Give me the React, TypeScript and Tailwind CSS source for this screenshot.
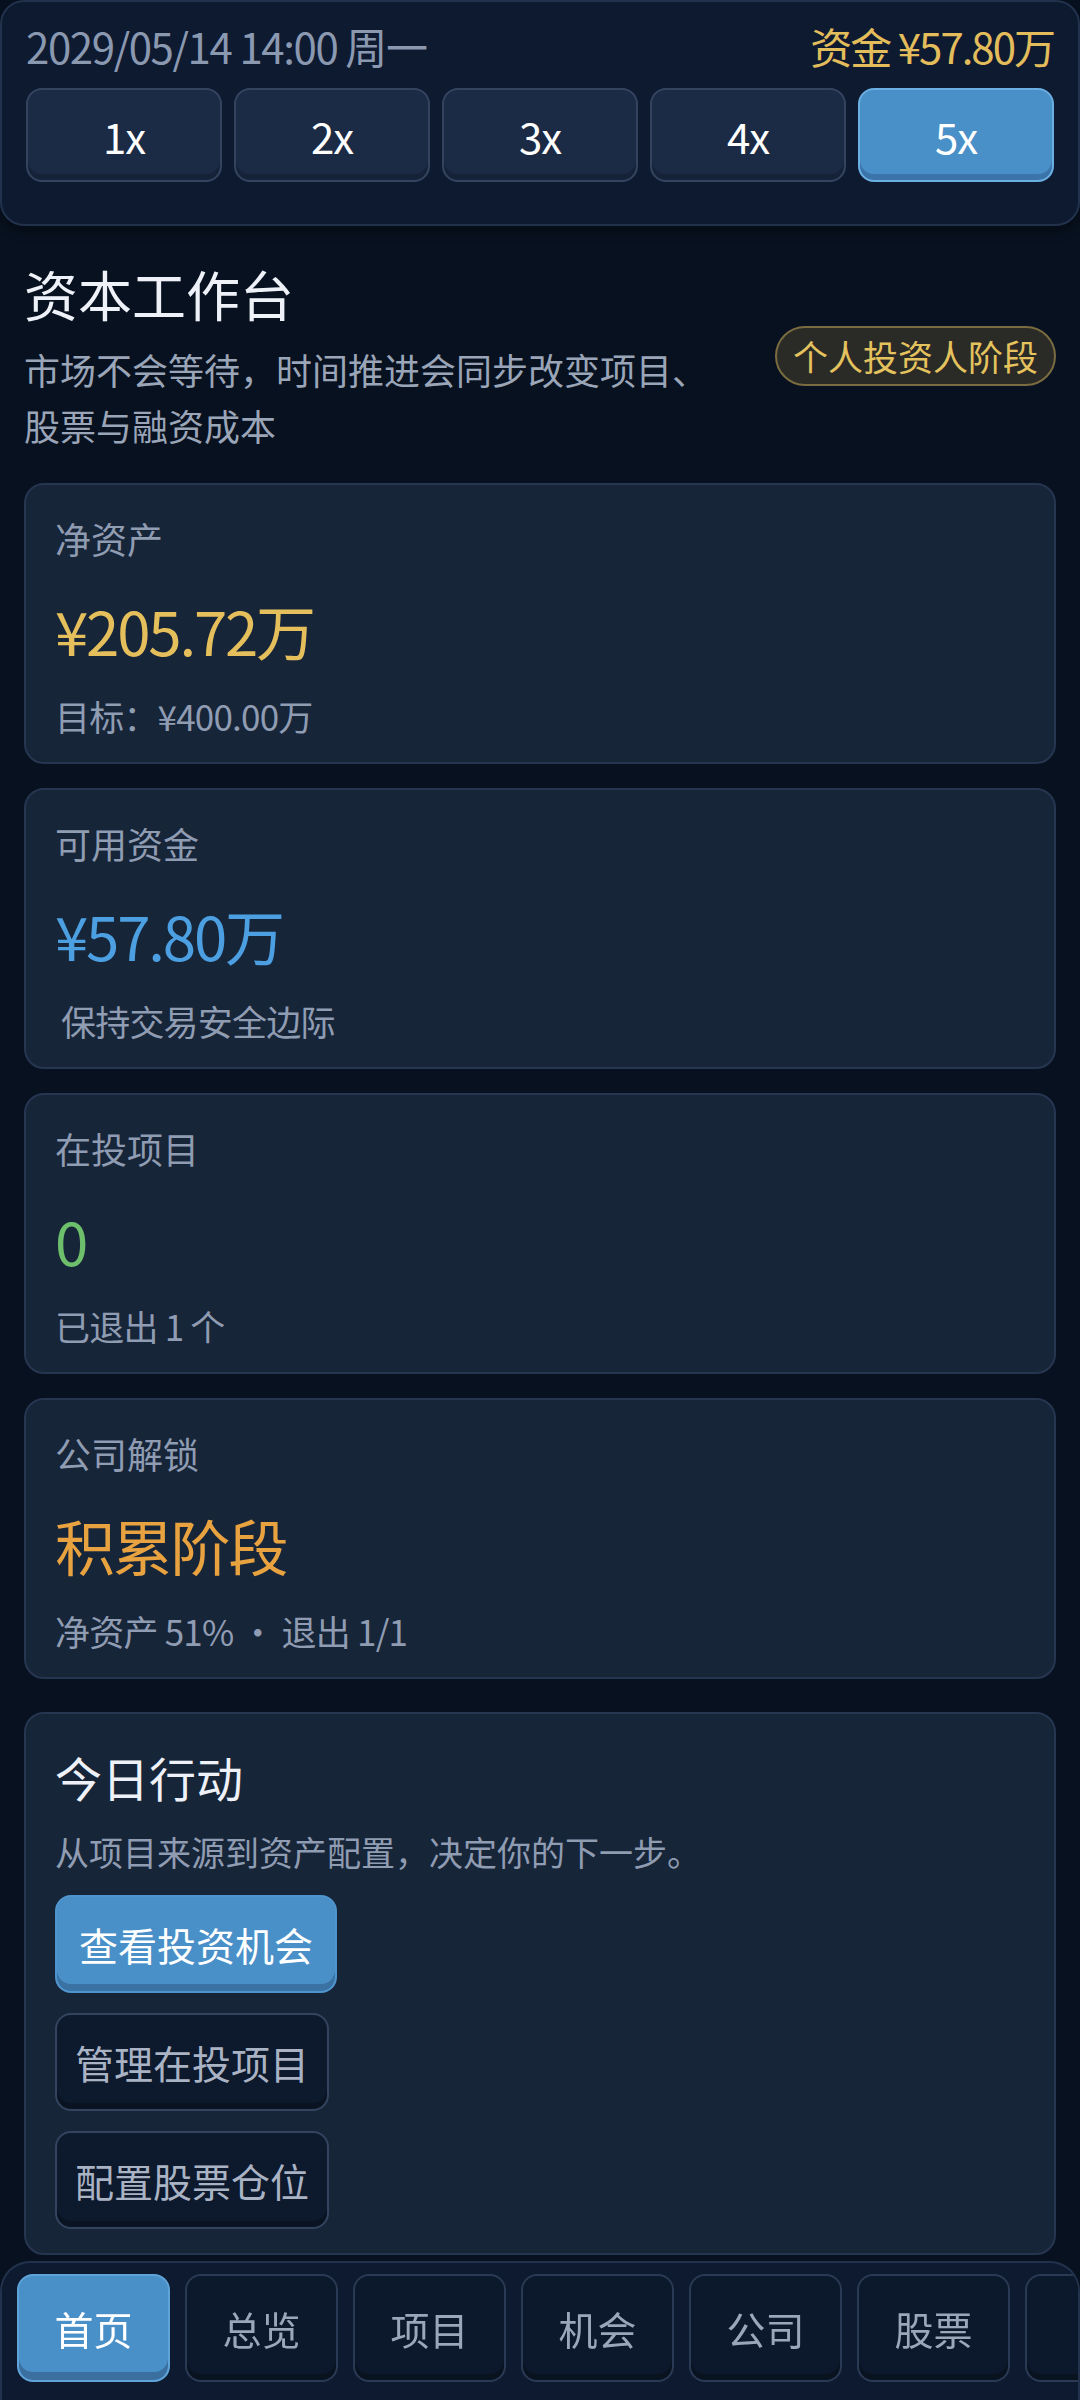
const speeds = ["1x", "2x", "3x", "4x", "5x"];

const stats = [
  { label: "净资产", value: "¥205.72万", color: "text-[#e4bf5c]", sub: "目标：¥400.00万", indent: false },
  { label: "可用资金", value: "¥57.80万", color: "text-[#4c9fe0]", sub: "保持交易安全边际", indent: true },
  { label: "在投项目", value: "0", color: "text-[#6dbf6c]", sub: "已退出 1 个", indent: false },
  { label: "公司解锁", value: "积累阶段", color: "text-[#e9a240]", sub: "净资产 51% · 退出 1/1", indent: false },
];

const tabs = ["首页", "总览", "项目", "机会", "公司", "股票", ""];

export default function App() {
  return (
    <div className="min-h-screen bg-[#08111f] font-['Noto_Sans_CJK_SC','Noto_Sans',sans-serif] pb-[160px]">
      <header className="rounded-[24px] border-2 border-[#22324d] bg-[#0e1a30] px-[24px] pt-[18px] pb-[42px] shadow-[0_4px_12px_rgba(0,0,0,0.35)]">
        <div className="flex items-center justify-between text-[42px] leading-[52px]">
          <span className="tracking-[-1.4px] text-[#8a98b0]">2029/05/14 14:00 周一</span>
          <span className="tracking-[-2px] text-[#e3bd5b]">资金 ¥57.80万</span>
        </div>
        <div className="mt-[16px] grid grid-cols-5 gap-[12px]">
          {speeds.map((s) => (
            <button
              key={s}
              className={
                s === "5x"
                  ? "h-[94px] rounded-[16px] border-2 border-[#6aaee2] bg-[#4a90c8] text-[42px] tracking-[-1px] text-white shadow-[inset_0_-6px_0_#3b74a8]"
                  : "h-[94px] rounded-[16px] border-2 border-[#34445f] bg-[#1c2b45] text-[42px] tracking-[-1px] text-white shadow-[inset_0_-6px_0_#162238]"
              }
            >
              {s}
            </button>
          ))}
        </div>
      </header>

      <main className="px-[24px]">
        <section className="flex items-center justify-between gap-[16px] pt-[33px]">
          <div className="max-w-[712px]">
            <h1 className="text-[54px] leading-[70px] text-[#eef2f8]">资本工作台</h1>
            <p className="mt-[12px] text-[36px] leading-[56px] text-[#9aa5b8]">
              市场不会等待，时间推进会同步改变项目、股票与融资成本
            </p>
          </div>
          <span className="shrink-0 rounded-full border-2 border-[#7a6c40] bg-[#2a2a26] px-[16px] text-[35px] leading-[56px] text-[#e4c25e]">
            个人投资人阶段
          </span>
        </section>

        <div className="mt-[30px] flex flex-col gap-[24px]">
          {stats.map((c) => (
            <div
              key={c.label}
              className="rounded-[20px] border-2 border-[#263650] bg-[#172539] px-[29px] pt-[26px] pb-[19px]"
            >
              <div className="text-[36px] leading-[54px] text-[#8f9cb2]">{c.label}</div>
              <div className={`mt-[27px] text-[60px] leading-[76px] tracking-[-2.2px] ${c.color}`}>{c.value}</div>
              <div
                className={`mt-[21px] text-[35px] leading-[54px] tracking-[-0.8px] text-[#8f9cb2] ${c.indent ? "pl-[6px]" : ""}`}
              >
                {c.sub}
              </div>
            </div>
          ))}
        </div>

        <div className="mt-[33px] rounded-[20px] border-2 border-[#263650] bg-[#172539] px-[29px] pt-[32px] pb-[24px]">
          <h2 className="text-[47px] leading-[62px] text-[#eef2f8]">今日行动</h2>
          <p className="mt-[19px] text-[34px] leading-[50px] text-[#8f9cb2]">
            从项目来源到资产配置，决定你的下一步。
          </p>
          <div className="mt-[18px] flex flex-col items-start gap-[20px]">
            <button className="h-[98px] rounded-[16px] border-2 border-[#4f95cd] bg-[#4a90c8] px-[22px] text-[39px] text-white shadow-[inset_0_-7px_0_#3a72a4]">
              查看投资机会
            </button>
            <button className="h-[98px] rounded-[16px] border-2 border-[#34445f] bg-[#0d192c] px-[18px] text-[39px] text-[#a9b3c4] shadow-[inset_0_-6px_0_#0a1322]">
              管理在投项目
            </button>
            <button className="h-[98px] rounded-[16px] border-2 border-[#34445f] bg-[#0d192c] px-[18px] text-[39px] text-[#a9b3c4] shadow-[inset_0_-6px_0_#0a1322]">
              配置股票仓位
            </button>
          </div>
        </div>
      </main>

      <nav className="fixed bottom-0 left-0 right-0 flex h-[139px] gap-[15px] overflow-hidden rounded-t-[30px] border-x-2 border-t-2 border-[#22324d] bg-[#0d1a2f] px-[15px] pt-[11px]">
        {tabs.map((t, i) => (
          <div
            key={i}
            className={
              i === 0
                ? "flex h-[108px] w-[153px] shrink-0 items-center justify-center rounded-[16px] border-2 border-[#5fa3d9] bg-[#4a90c8] text-[39px] text-white shadow-[inset_0_-8px_0_#3a6f9f]"
                : "flex h-[108px] w-[153px] shrink-0 items-center justify-center rounded-[16px] border-2 border-[#2a3a54] bg-[#0c182b] text-[39px] text-[#9aa6ba] shadow-[inset_0_-6px_0_#09121f]"
            }
          >
            {t}
          </div>
        ))}
      </nav>
    </div>
  );
}
